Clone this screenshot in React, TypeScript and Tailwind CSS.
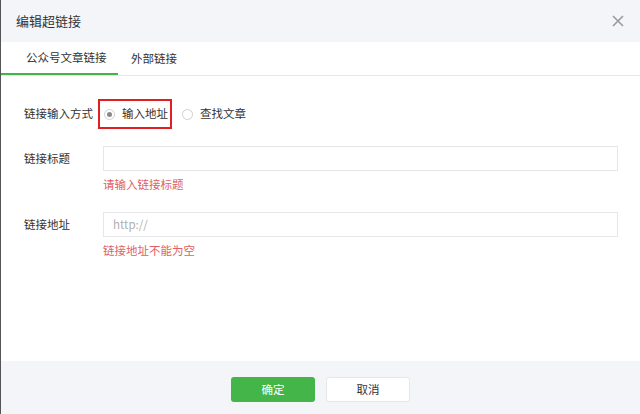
import React from "react";

const font = { fontFamily: '"Noto Sans CJK SC", "Noto Sans", sans-serif' };

export default function App() {
  return (
    <div className="w-[640px] h-[414px] flex flex-col bg-white border-l border-[#555] text-[11.5px] text-[#333]" style={font}>
      <div className="h-[42px] shrink-0 bg-[#f4f5f9] flex items-center justify-between pl-[15px] pr-[16px]">
        <span className="text-[13px] text-[#333]">编辑超链接</span>
        <svg width="12" height="12" viewBox="0 0 12 12" className="text-[#9a9a9a]">
          <path d="M1 1L11 11M11 1L1 11" stroke="currentColor" strokeWidth="1.6" />
        </svg>
      </div>
      <div className="h-[34px] shrink-0 flex border-b border-[#e7e7eb]">
        <div className="w-[117px] flex items-center pl-[25px] border-b-2 border-[#44b549] text-[#333] whitespace-nowrap">公众号文章链接</div>
        <div className="flex items-center pl-[13px] text-[#333] whitespace-nowrap">外部链接</div>
      </div>
      <div className="flex-1 flex flex-col pl-[23px] pr-[22px] pt-[23px]">
        <div className="flex items-center h-[30px]">
          <span className="w-[74px] shrink-0 text-[#333] whitespace-nowrap">链接输入方式</span>
          <div className="h-[30px] w-[74px] border-2 border-[#e02020] flex items-center pl-[4px] gap-[7px] whitespace-nowrap">
            <span className="w-[11px] h-[11px] rounded-full border border-[#d0d0d0] flex items-center justify-center">
              <span className="w-[5px] h-[5px] rounded-full bg-[#888]"></span>
            </span>
            <span>输入地址</span>
          </div>
          <div className="flex items-center gap-[7px] ml-[10px] whitespace-nowrap">
            <span className="w-[11px] h-[11px] rounded-full border border-[#d0d0d0]"></span>
            <span>查找文章</span>
          </div>
        </div>
        <div className="flex mt-[17px]">
          <span className="w-[79px] shrink-0 h-[25px] flex items-center">链接标题</span>
          <div className="flex-1 flex flex-col">
            <div className="h-[25px] border border-[#e7e7eb] bg-white"></div>
            <span className="mt-[5px] text-[#e15f63]">请输入链接标题</span>
          </div>
        </div>
        <div className="flex mt-[19px]">
          <span className="w-[79px] shrink-0 h-[25px] flex items-center">链接地址</span>
          <div className="flex-1 flex flex-col">
            <div className="h-[25px] border border-[#e7e7eb] bg-white flex items-center px-[9px] text-[#b0b0b0]">http://</div>
            <span className="mt-[5px] text-[#e15f63]">链接地址不能为空</span>
          </div>
        </div>
      </div>
      <div className="h-[53px] shrink-0 bg-[#f4f5f9] flex items-start justify-center gap-[11px] pt-[16px]">
        <div className="w-[84px] h-[25px] rounded-[3px] bg-[#44b549] text-white flex items-center justify-center">确定</div>
        <div className="w-[84px] h-[25px] rounded-[3px] bg-white border border-[#e4e8eb] text-[#333] flex items-center justify-center">取消</div>
      </div>
    </div>
  );
}
